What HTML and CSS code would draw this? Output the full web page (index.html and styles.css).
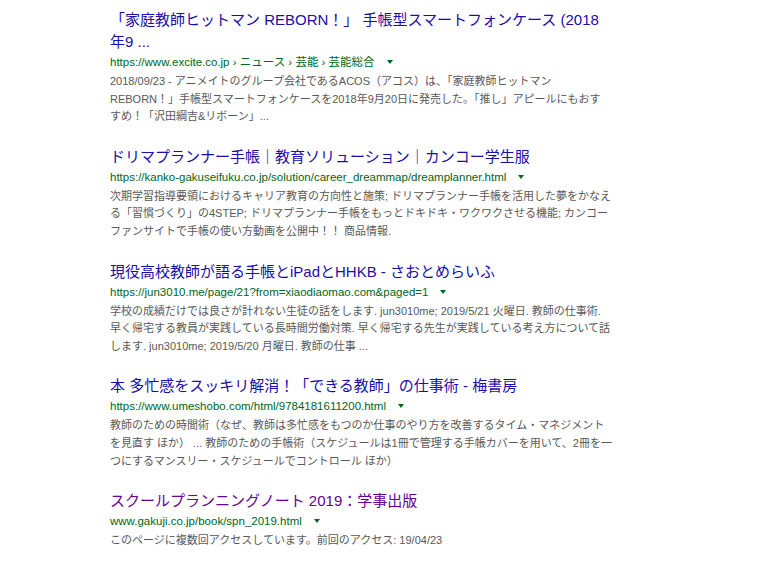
FILE: index.html
```html
<!DOCTYPE html>
<html lang="ja">
<head>
<meta charset="utf-8">
<title>検索結果</title>
<link rel="stylesheet" href="styles.css">
</head>
<body>
<div class="results">
  <div class="result">
    <h3 class="title"><a href="#">「家庭教師ヒットマン REBORN！」 手帳型スマートフォンケース (2018<br>年9 ...</a></h3>
    <div class="url"><cite>https://www.excite.co.jp › ニュース › 芸能 › 芸能総合</cite><span class="arrow"></span></div>
    <div class="snippet">2018/09/23 - アニメイトのグループ会社であるACOS（アコス）は、「家庭教師ヒットマン<br>REBORN！」手帳型スマートフォンケースを2018年9月20日に発売した。「推し」アピールにもおす<br>すめ！「沢田綱吉&amp;リボーン」...</div>
  </div>
  <div class="result">
    <h3 class="title"><a href="#">ドリマプランナー手帳｜教育ソリューション｜カンコー学生服</a></h3>
    <div class="url"><cite>https://kanko-gakuseifuku.co.jp/solution/career_dreammap/dreamplanner.html</cite><span class="arrow"></span></div>
    <div class="snippet">次期学習指導要領におけるキャリア教育の方向性と施策; ドリマプランナー手帳を活用した夢をかなえ<br>る「習慣づくり」の4STEP; ドリマプランナー手帳をもっとドキドキ・ワクワクさせる機能; カンコー<br>ファンサイトで手帳の使い方動画を公開中！！ 商品情報.</div>
  </div>
  <div class="result">
    <h3 class="title"><a href="#">現役高校教師が語る手帳とiPadとHHKB - さおとめらいふ</a></h3>
    <div class="url"><cite>https://jun3010.me/page/21?from=xiaodiaomao.com&amp;paged=1</cite><span class="arrow"></span></div>
    <div class="snippet">学校の成績だけでは良さが計れない生徒の話をします. jun3010me; 2019/5/21 火曜日. 教師の仕事術.<br>早く帰宅する教員が実践している長時間労働対策. 早く帰宅する先生が実践している考え方について話<br>します. jun3010me; 2019/5/20 月曜日. 教師の仕事 ...</div>
  </div>
  <div class="result">
    <h3 class="title"><a href="#">本 多忙感をスッキリ解消！「できる教師」の仕事術 - 梅書房</a></h3>
    <div class="url"><cite>https://www.umeshobo.com/html/9784181611200.html</cite><span class="arrow"></span></div>
    <div class="snippet">教師のための時間術（なぜ、教師は多忙感をもつのか仕事のやり方を改善するタイム・マネジメント<br>を見直す ほか） ... 教師のための手帳術（スケジュールは1冊で管理する手帳カバーを用いて、2冊を一<br>つにするマンスリー・スケジュールでコントロール ほか）</div>
  </div>
  <div class="result">
    <h3 class="title"><a class="visited" href="#">スクールプランニングノート 2019：学事出版</a></h3>
    <div class="url"><cite>www.gakuji.co.jp/book/spn_2019.html</cite><span class="arrow"></span></div>
    <div class="snippet">このページに複数回アクセスしています。前回のアクセス: 19/04/23</div>
  </div>
</div>
</body>
</html>
```

FILE: styles.css
```css
html, body {
  margin: 0;
  padding: 0;
  background: #ffffff;
}

body {
  font-family: "Liberation Sans", Arial, "Noto Sans CJK JP", sans-serif;
}

.results {
  display: flex;
  flex-direction: column;
  gap: 20px;
  padding: 9px 0 0 110px;
}

.result {
  display: flex;
  flex-direction: column;
}

.title {
  margin: 0;
  font-size: 15px;
  font-weight: normal;
  line-height: 22px;
}

.title a {
  color: #1a0dab;
  text-decoration: none;
}

.title a.visited {
  color: #660099;
}

.url {
  display: flex;
  align-items: center;
  height: 18px;
  font-size: 11.5px;
  line-height: 18px;
  white-space: nowrap;
}

.url cite {
  font-style: normal;
  color: #006621;
}

.arrow {
  display: inline-block;
  width: 0;
  height: 0;
  margin-left: 12px;
  border-top: 4px solid #006621;
  border-left: 3px solid transparent;
  border-right: 3px solid transparent;
}

.snippet {
  padding-top: 2px;
  font-size: 11px;
  line-height: 17.6px;
  color: #585858;
  white-space: nowrap;
}
```
